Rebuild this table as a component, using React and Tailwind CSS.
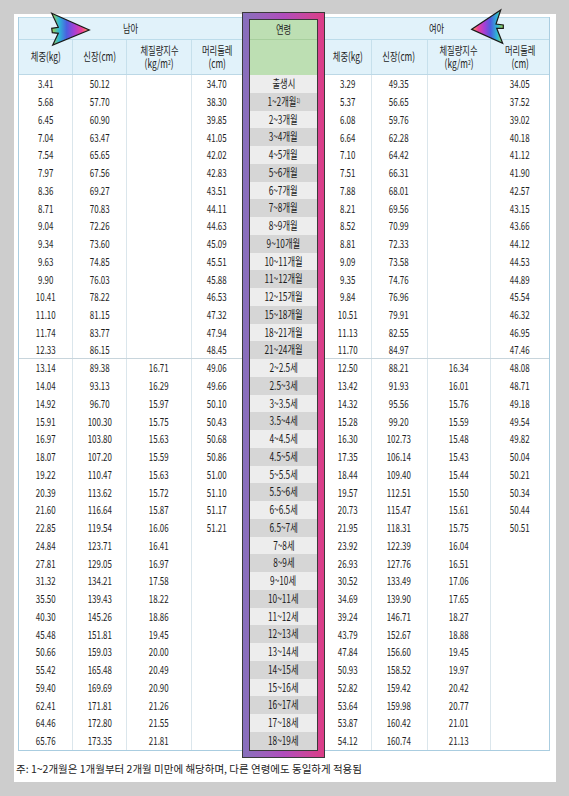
import React from 'react'

const boys = [
  ['3.41', '50.12', '', '34.70'],
  ['5.68', '57.70', '', '38.30'],
  ['6.45', '60.90', '', '39.85'],
  ['7.04', '63.47', '', '41.05'],
  ['7.54', '65.65', '', '42.02'],
  ['7.97', '67.56', '', '42.83'],
  ['8.36', '69.27', '', '43.51'],
  ['8.71', '70.83', '', '44.11'],
  ['9.04', '72.26', '', '44.63'],
  ['9.34', '73.60', '', '45.09'],
  ['9.63', '74.85', '', '45.51'],
  ['9.90', '76.03', '', '45.88'],
  ['10.41', '78.22', '', '46.53'],
  ['11.10', '81.15', '', '47.32'],
  ['11.74', '83.77', '', '47.94'],
  ['12.33', '86.15', '', '48.45'],
  ['13.14', '89.38', '16.71', '49.06'],
  ['14.04', '93.13', '16.29', '49.66'],
  ['14.92', '96.70', '15.97', '50.10'],
  ['15.91', '100.30', '15.75', '50.43'],
  ['16.97', '103.80', '15.63', '50.68'],
  ['18.07', '107.20', '15.59', '50.86'],
  ['19.22', '110.47', '15.63', '51.00'],
  ['20.39', '113.62', '15.72', '51.10'],
  ['21.60', '116.64', '15.87', '51.17'],
  ['22.85', '119.54', '16.06', '51.21'],
  ['24.84', '123.71', '16.41', ''],
  ['27.81', '129.05', '16.97', ''],
  ['31.32', '134.21', '17.58', ''],
  ['35.50', '139.43', '18.22', ''],
  ['40.30', '145.26', '18.86', ''],
  ['45.48', '151.81', '19.45', ''],
  ['50.66', '159.03', '20.00', ''],
  ['55.42', '165.48', '20.49', ''],
  ['59.40', '169.69', '20.90', ''],
  ['62.41', '171.81', '21.26', ''],
  ['64.46', '172.80', '21.55', ''],
  ['65.76', '173.35', '21.81', ''],
]

const girls = [
  ['3.29', '49.35', '', '34.05'],
  ['5.37', '56.65', '', '37.52'],
  ['6.08', '59.76', '', '39.02'],
  ['6.64', '62.28', '', '40.18'],
  ['7.10', '64.42', '', '41.12'],
  ['7.51', '66.31', '', '41.90'],
  ['7.88', '68.01', '', '42.57'],
  ['8.21', '69.56', '', '43.15'],
  ['8.52', '70.99', '', '43.66'],
  ['8.81', '72.33', '', '44.12'],
  ['9.09', '73.58', '', '44.53'],
  ['9.35', '74.76', '', '44.89'],
  ['9.84', '76.96', '', '45.54'],
  ['10.51', '79.91', '', '46.32'],
  ['11.13', '82.55', '', '46.95'],
  ['11.70', '84.97', '', '47.46'],
  ['12.50', '88.21', '16.34', '48.08'],
  ['13.42', '91.93', '16.01', '48.71'],
  ['14.32', '95.56', '15.76', '49.18'],
  ['15.28', '99.20', '15.59', '49.54'],
  ['16.30', '102.73', '15.48', '49.82'],
  ['17.35', '106.14', '15.43', '50.04'],
  ['18.44', '109.40', '15.44', '50.21'],
  ['19.57', '112.51', '15.50', '50.34'],
  ['20.73', '115.47', '15.61', '50.44'],
  ['21.95', '118.31', '15.75', '50.51'],
  ['23.92', '122.39', '16.04', ''],
  ['26.93', '127.76', '16.51', ''],
  ['30.52', '133.49', '17.06', ''],
  ['34.69', '139.90', '17.65', ''],
  ['39.24', '146.71', '18.27', ''],
  ['43.79', '152.67', '18.88', ''],
  ['47.84', '156.60', '19.45', ''],
  ['50.93', '158.52', '19.97', ''],
  ['52.82', '159.42', '20.42', ''],
  ['53.64', '159.98', '20.77', ''],
  ['53.87', '160.42', '21.01', ''],
  ['54.12', '160.74', '21.13', ''],
]

const ages = [
  '출생시', '1~2개월', '2~3개월', '3~4개월', '4~5개월', '5~6개월', '6~7개월', '7~8개월',
  '8~9개월', '9~10개월', '10~11개월', '11~12개월', '12~15개월', '15~18개월', '18~21개월', '21~24개월',
  '2~2.5세', '2.5~3세', '3~3.5세', '3.5~4세', '4~4.5세', '4.5~5세', '5~5.5세', '5.5~6세',
  '6~6.5세', '6.5~7세', '7~8세', '8~9세', '9~10세', '10~11세', '11~12세', '12~13세',
  '13~14세', '14~15세', '15~16세', '16~17세', '17~18세', '18~19세',
]

// squeezed text, the source renders a narrow face
function T({ children }) {
  return <span className="inline-block scale-x-[0.72] whitespace-nowrap">{children}</span>
}

function HeadLabels() {
  return [
    <T key="w">체중(kg)</T>,
    <T key="h">신장(cm)</T>,
    <div key="b" className="flex flex-col items-center leading-[13px]">
      <T>체질량지수</T>
      <T>(kg/m<sup className="text-[7px]">2</sup>)</T>
    </div>,
    <div key="c" className="flex flex-col items-center leading-[13px]">
      <T>머리둘레</T>
      <T>(cm)</T>
    </div>,
  ]
}

function Side({ title, rows, widths, left }) {
  const labels = HeadLabels()
  return (
    <div className={left ? 'w-[224px] border-l border-b border-[#aacde0]' : 'w-[225px] border-r border-b border-[#aacde0]'}>
      <div className="h-[23px] flex items-center justify-center bg-[#e1f2fa] border-t border-b border-[#bcdcea] text-[11.5px] text-[#222]">
        <T>{title}</T>
      </div>
      <div className="h-[35px] flex bg-[#e1f2fa] border-b border-[#bcd8e6]">
        {labels.map((l, i) => (
          <div
            key={i}
            style={{ width: widths[i] }}
            className={(i < 3 ? 'border-r border-[#c6e0ec] ' : '') + 'flex items-center justify-center text-[11.5px] text-[#222]'}
          >
            {l}
          </div>
        ))}
      </div>
      {rows.map((r, ri) => (
        <div key={ri} className={ri === 15 ? 'h-[17.75px] flex border-b border-[#c8d5dc]' : 'h-[17.75px] flex'}>
          {r.map((v, i) => (
            <div
              key={i}
              style={{ width: widths[i] }}
              className={(i < 3 ? 'border-r border-[#dbe6ec] ' : '') + 'flex items-center justify-center text-[11px] leading-none text-[#1e1e1e]'}
            >
              <T>{v}</T>
            </div>
          ))}
        </div>
      ))}
    </div>
  )
}

function AgeColumn() {
  return (
    <div className="-mt-[5px] w-[83px] border border-[#3a3a3a] p-[6px] bg-linear-to-r from-[#8670bc] via-[#b04cbc] to-[#dc3c86]">
      <div className="border border-[#3a3a3a]">
        <div className="h-[20px] flex items-center justify-center bg-[#bddfb3] border-b border-[#a7cf9d] text-[11.5px] text-[#222]">
          <T>연령</T>
        </div>
        <div className="h-[35px] bg-[#bddfb3]" />
        {ages.map((a, i) => (
          <div
            key={a}
            className={(i % 2 === 0 ? 'bg-[#ededed] ' : 'bg-[#d6d6d6] ') + 'h-[17.75px] flex items-center justify-center text-[11.5px] leading-none text-[#1a1a1a]'}
          >
            <T>
              {a}
              {i === 1 && <sup className="text-[6px]">1)</sup>}
            </T>
          </div>
        ))}
      </div>
    </div>
  )
}

function Arrow({ flip }) {
  const id = flip ? 'rg' : 'lg'
  const stops = ['#a6d448', '#2db7d6', '#4b5fe0', '#a63fd6', '#ec3f9a', '#f6b04a']
  const ordered = flip ? [...stops].reverse() : stops
  return (
    <svg
      className={flip ? 'absolute left-[456px] -top-[6px]' : 'absolute left-[36px] -top-[3px]'}
      width={flip ? 36 : 42}
      height={38}
      viewBox={flip ? '0 0 36 38' : '0 0 42 38'}
    >
      <defs>
        <linearGradient id={id} x1="0" x2="1" y1="0" y2="0">
          {ordered.map((c, i) => (
            <stop key={i} offset={i / (ordered.length - 1)} stopColor={c} />
          ))}
        </linearGradient>
      </defs>
      {flip ? (
        <polygon
          points="1.7,21.3 30.7,2 26,16 33.3,17 33.3,20.3 26.7,20.3 32.7,35.3"
          fill={`url(#${id})`}
          stroke="#1a1a1a"
          strokeWidth="1.2"
          strokeLinejoin="miter"
        />
      ) : (
        <polygon
          points="1.7,2.3 39.3,19 2.7,34 8.3,22.3 2.3,21.7 1.7,17.3 8.3,16.3"
          fill={`url(#${id})`}
          stroke="#1a1a1a"
          strokeWidth="1.2"
          strokeLinejoin="miter"
        />
      )}
    </svg>
  )
}

export default function App() {
  return (
    <div className="min-h-screen bg-[#cdcdcd] pt-[14px] pl-[14px] font-['Noto_Sans_CJK_KR','Noto_Sans',sans-serif]">
      <div className="relative w-[542px] h-[768px] bg-white pl-[4px] pt-[3px]">
        <div className="flex items-start">
          <Side title="남아" rows={boys} widths={[54, 54, 65, 50]} left />
          <AgeColumn />
          <Side title="여아" rows={girls} widths={[47, 56, 64, 58]} />
        </div>
        <p className="mt-[5px] -ml-[2px] text-[10.5px] leading-[12px] text-[#222]">
          주: 1~2개월은 1개월부터 2개월 미만에 해당하며, 다른 연령에도 동일하게 적용됨
        </p>

        <Arrow />
        <Arrow flip />
      </div>
    </div>
  )
}
